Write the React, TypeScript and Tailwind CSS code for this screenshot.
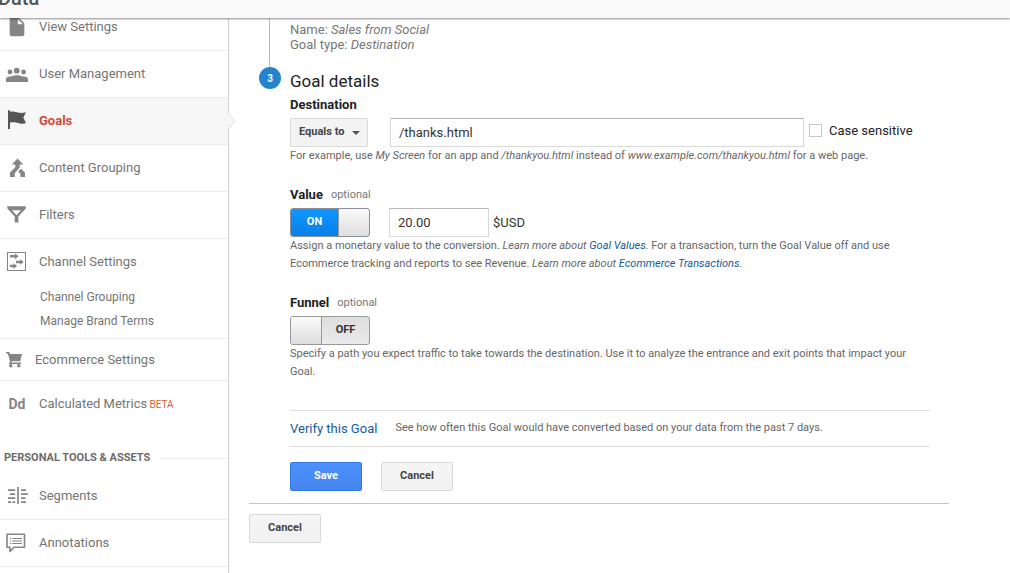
import type { ReactNode } from "react";
import { useState } from "react";
import { MdInsertDriveFile } from "react-icons/md";

const UsersIcon = () => (
	<svg className="size-6" viewBox="0 0 24 24" fill="currentColor">
		<circle cx="5" cy="10" r="2.4" />
		<circle cx="11.7" cy="8.7" r="2.9" />
		<circle cx="18.6" cy="10" r="2.4" />
		<path d="M1 20v-3c0-2 3-3 5.2-2.4C8 13.6 10 13.2 12 13.2s4 .4 5.8 1.4C20 14 23 15 23 17v3z" />
	</svg>
);

const FlagIcon = () => (
	<svg className="size-6 text-[#555]" viewBox="0 0 24 24" fill="currentColor">
		<path d="M3 1.3h2V20H3z" />
		<path d="M5 2.8c3-1 5 .2 8 .8 3 .5 5 .3 8-.4l-2.7 5.2L21 14.2c-4 1-6 .2-9-.5-3-.6-5-.6-7 0z" />
	</svg>
);

const MergeIcon = () => (
	<svg className="size-6" viewBox="0 0 24 24" fill="currentColor">
		<path d="M12.5 2.5 18.3 8.500h-3.600v3.200L9.800 17v4H5v-4.500l5.300-5.300V8.500H6.800z" />
		<path d="m16.2 12.8 3.8 4V21h-4.600v-3.200l-2.300-2.300z" />
	</svg>
);

const FilterIcon = () => (
	<svg className="size-6" viewBox="0 0 24 24" fill="currentColor">
		<path
			fillRule="evenodd"
			d="M2.3 3.2h18.500v2.200l-7.400 8.200v6h-3.700v-6L2.3 5.4zM7 7.3l4.500 4.900L16 7.300z"
		/>
	</svg>
);

const ChannelIcon = () => (
	<svg className="size-6" viewBox="0 0 24 24" fill="currentColor">
		<rect x="2.5" y="2.5" width="18" height="18" fill="none" stroke="currentColor" />
		<path d="M5 5h5V3.300L13.5 6.300 10 9.300V7.500H5zM11 10.800h4V9.200l3.700 2.800-3.700 2.800v-1.600h-4zM5 14.800h3.500v-1.600L12.200 16l-3.700 2.800v-1.600H5z" />
	</svg>
);

const CartIcon = () => (
	<svg className="size-[18px]" viewBox="0 0 18 18" fill="currentColor">
		<path d="M1 1h3.200l1 2H17l-1.800 7.200H6.800l-.5 1.300H16v1.500H4l1-3L2.800 2.600H1z" />
		<circle cx="5.8" cy="14.8" r="1.800" />
		<circle cx="13.8" cy="14.8" r="1.800" />
	</svg>
);

const SegmentsIcon = () => (
	<svg
		className="size-6"
		viewBox="0 0 24 24"
		fill="none"
		stroke="currentColor"
		strokeWidth="1.7">
		<path d="M13 3v17M3 6.200h7.200M5 10.200h5.200M3 14.200h7.200M3 18.200h3.200M7.500 18.200h2.700M16 6.200h5M16 10.200h7M16 14.200h4.500M16 18.200h5" />
	</svg>
);

const AnnotationsIcon = () => (
	<svg className="size-6" viewBox="0 0 24 24" fill="none" stroke="currentColor">
		<path
			strokeWidth="1.6"
			d="M2 3.300h17.500v13H9l-4 4.200v-4.200H2z"
			strokeLinejoin="round"
		/>
		<path d="M4.8 7.500h1.500M7.300 7.500H17M4.800 10h1.500M7.300 10H17M4.800 12.500h1.500M7.300 12.500H17" />
	</svg>
);

const NavLink = ({
	icon,
	active,
	children,
}: {
	icon: ReactNode;
	active?: boolean;
	children: ReactNode;
}) => (
	<a
		href="#"
		aria-current={active ? "page" : undefined}
		className={`flex h-[46px] items-center gap-2.5 pl-[5px] ${
			active ? "font-bold text-[#d14836]" : ""
		}`}>
		<span className="flex w-6 shrink-0 justify-center text-[#858585]">
			{icon}
		</span>
		<span>{children}</span>
	</a>
);

const Sidebar = () => (
	<nav className="-mt-3.5 w-[229px] shrink-0 border-r border-[#d0d0d0] text-[13px] text-[#757575]">
		<ul className="[&>li]:border-[#ebebeb]">
			<li className="border-b">
				<NavLink icon={<MdInsertDriveFile className="size-[22px]" />}>
					View Settings
				</NavLink>
			</li>
			<li className="border-b">
				<NavLink icon={<UsersIcon />}>User Management</NavLink>
			</li>
			<li className="relative border-b bg-[#f7f7f7]">
				<NavLink icon={<FlagIcon />} active>
					Goals
				</NavLink>
				<svg
					className="absolute top-3.5 left-full h-[18px] w-2"
					viewBox="0 0 8 18">
					<path d="M0 0v18l7.500-9z" fill="#f7f7f7" />
					<path d="m0 1 7 8-7 8" fill="none" stroke="#e0e0e0" />
				</svg>
			</li>
			<li className="border-b">
				<NavLink icon={<MergeIcon />}>Content Grouping</NavLink>
			</li>
			<li className="border-b">
				<NavLink icon={<FilterIcon />}>Filters</NavLink>
			</li>
			<li className="border-b pb-[5px]">
				<NavLink icon={<ChannelIcon />}>Channel Settings</NavLink>
				<ul className="pl-10 text-xs leading-6">
					<li>
						<a href="#">Channel Grouping</a>
					</li>
					<li>
						<a href="#">Manage Brand Terms</a>
					</li>
				</ul>
			</li>
			<li className="border-b">
				<a href="#" className="flex h-[41px] items-center gap-3 pl-[5px]">
					<span className="text-[#858585]">
						<CartIcon />
					</span>
					Ecommerce Settings
				</a>
			</li>
			<li>
				<NavLink
					icon={<span className="text-sm font-bold text-[#858585]">Dd</span>}>
					Calculated Metrics{" "}
					<span className="-ml-px text-[10px] text-[#d8622f]">BETA</span>
				</NavLink>
			</li>
		</ul>
		<h2 className="flex h-[46px] items-center gap-2.5 pt-4 pl-1 text-[11px] font-bold text-[#6b6b6b]">
			PERSONAL TOOLS &amp; ASSETS
			<span className="h-px grow bg-[#ebebeb]" />
		</h2>
		<ul className="[&>li]:border-[#ebebeb]">
			<li className="border-b">
				<NavLink icon={<SegmentsIcon />}>Segments</NavLink>
			</li>
			<li className="border-b">
				<NavLink icon={<AnnotationsIcon />}>Annotations</NavLink>
			</li>
		</ul>
	</nav>
);

const Toggle = ({
	id,
	checked,
	onChange,
}: {
	id: string;
	checked: boolean;
	onChange: (checked: boolean) => void;
}) => (
	<label
		className={`flex h-[29px] w-20 cursor-pointer overflow-hidden rounded-[3px] border text-[11px] font-bold ${
			checked
				? "border-[#8a9099] bg-linear-to-b from-[#0f96ff] to-[#0a80e8] text-white"
				: "flex-row-reverse border-[#999] bg-linear-to-b from-[#dedede] to-[#eaeaea] text-[#333]"
		}`}>
		<input
			id={id}
			type="checkbox"
			role="switch"
			className="sr-only"
			checked={checked}
			onChange={e => onChange(e.target.checked)}
		/>
		<span className="flex grow items-center justify-center">
			{checked ? "ON" : "OFF"}
		</span>
		<span
			className={`w-[31px] bg-linear-to-b from-[#fafafa] to-[#dedede] ${
				checked ? "border-l border-[#999]" : "border-r border-[#999]"
			}`}
		/>
	</label>
);

const Button = ({
	primary,
	children,
}: {
	primary?: boolean;
	children: ReactNode;
}) => (
	<button
		type="button"
		className={`h-[29px] w-[72px] rounded-xs border text-[11px] font-bold ${
			primary
				? "border-[#3079ed] bg-linear-to-b from-[#4d90fe] to-[#4787ed] text-white"
				: "border-[#d8d8d8] bg-linear-to-b from-[#f5f5f5] to-[#f1f1f1] text-[#444]"
		}`}>
		{children}
	</button>
);

const App = () => {
	const [state, setState] = useState({
		match: "equals",
		destination: "/thanks.html",
		caseSensitive: false,
		hasValue: true,
		value: "20.00",
		hasFunnel: false,
	});

	return (
		<div className="flex min-h-screen flex-col overflow-hidden bg-white font-[Roboto,sans-serif] text-[13px] text-[#222]">
			<header className="relative z-10 h-[18px] bg-[#fafafa] shadow-[0_1px_2px_rgba(0,0,0,0.45)]">
				<div className="h-full overflow-hidden">
					<h1 className="-mt-3.5 -ml-0.5 text-xl leading-6 font-medium text-[#555]">
						Data
					</h1>
				</div>
			</header>
			<div className="flex grow">
				<Sidebar />
				<main className="min-w-0 grow px-5">
					<div className="max-w-[700px]">
						<section className="flex h-[49px]">
							<div className="ml-5 w-[21px] shrink-0 border-l border-[#bbb]" />
							<div className="pt-1 leading-[15px] text-[#777]">
								<p>
									Name: <em>Sales from Social</em>
								</p>
								<p>
									Goal type: <em>Destination</em>
								</p>
							</div>
						</section>
						<section className="flex">
							<div className="w-[41px] shrink-0 pl-2.5">
								<span className="flex size-[22px] items-center justify-center rounded-full bg-[#2483ce] text-[10px] font-bold text-white">
									3
								</span>
							</div>
							<form className="max-w-[640px] grow pb-3">
								<h2 className="pt-0.5 text-[17px] leading-6">Goal details</h2>
								<label
									className="block leading-6 font-bold"
									htmlFor="destination">
									Destination
								</label>
								<div className="mt-px flex items-center">
									<div className="relative">
										<select
											aria-label="Match type"
											className="h-[29px] w-[78px] appearance-none rounded-xs border border-[#d8d8d8] bg-[#f3f3f3] pl-2 text-[11px] font-bold text-[#444]"
											value={state.match}
											onChange={e =>
												setState({ ...state, match: e.target.value })
											}>
											<option value="equals">Equals to</option>
											<option value="begins">Begins with</option>
											<option value="regex">Regular expression</option>
										</select>
										<svg
											className="pointer-events-none absolute top-[13px] right-2 h-1 w-2"
											viewBox="0 0 8 4">
											<path d="M0 0h8L4 4z" fill="#555" />
										</svg>
									</div>
									<input
										id="destination"
										type="text"
										className="ml-[22px] h-[29px] w-[414px] border border-[#d9d9d9] border-t-[#b9b9b9] px-2 text-[#333]"
										value={state.destination}
										onChange={e =>
											setState({ ...state, destination: e.target.value })
										}
									/>
									<label className="-mr-5 flex items-center gap-[7px] pb-1 pl-[5px] whitespace-nowrap">
										<input
											type="checkbox"
											className="size-[13px] appearance-none border border-[#c6c6c6] checked:bg-[#4d90fe]"
											checked={state.caseSensitive}
											onChange={e =>
												setState({ ...state, caseSensitive: e.target.checked })
											}
										/>
										Case sensitive
									</label>
								</div>
								<p className="text-[11px] leading-[18px] text-[#666]">
									For example, use <em>My Screen</em> for an app and{" "}
									<em>/thankyou.html</em> instead of{" "}
									<em>www.example.com/thankyou.html</em> for a web page.
								</p>

								<div className="mt-[18px] flex items-center gap-2 leading-6">
									<label className="font-bold" htmlFor="has-value">
										Value
									</label>
									<span className="text-[11px] text-[#777]">optional</span>
								</div>
								<div className="mt-px flex items-center">
									<Toggle
										id="has-value"
										checked={state.hasValue}
										onChange={hasValue => setState({ ...state, hasValue })}
									/>
									<input
										type="text"
										aria-label="Goal value"
										className="ml-[19px] h-[29px] w-[100px] border border-[#d9d9d9] border-t-[#b9b9b9] px-2 text-[#333]"
										value={state.value}
										onChange={e =>
											setState({ ...state, value: e.target.value })
										}
									/>
									<span className="pl-1 text-[#333]">$USD</span>
								</div>
								<p className="text-[11px] leading-[18px] text-[#666]">
									Assign a monetary value to the conversion.{" "}
									<em>
										Learn more about{" "}
										<a className="text-[#15599c]" href="#">
											Goal Values
										</a>
										.
									</em>{" "}
									For a transaction, turn the Goal Value off and use Ecommerce
									tracking and reports to see Revenue.{" "}
									<em>
										Learn more about{" "}
										<a className="text-[#15599c]" href="#">
											Ecommerce Transactions
										</a>
										.
									</em>
								</p>

								<div className="mt-[18px] flex items-center gap-2 leading-6">
									<label className="font-bold" htmlFor="has-funnel">
										Funnel
									</label>
									<span className="text-[11px] text-[#777]">optional</span>
								</div>
								<div className="mt-px">
									<Toggle
										id="has-funnel"
										checked={state.hasFunnel}
										onChange={hasFunnel => setState({ ...state, hasFunnel })}
									/>
								</div>
								<p className="text-[11px] leading-[18px] text-[#666]">
									Specify a path you expect traffic to take towards the
									destination. Use it to analyze the entrance and exit points
									that impact your Goal.
								</p>

								<div className="mt-[29px] flex h-[37px] items-center gap-[18px] border-y border-[#ddd]">
									<a className="text-[#15599c]" href="#">
										Verify this Goal
									</a>
									<span className="text-[11px] text-[#666]">
										See how often this Goal would have converted based on your
										data from the past 7 days.
									</span>
								</div>
								<div className="mt-[15px] flex gap-[19px]">
									<Button primary>Save</Button>
									<Button>Cancel</Button>
								</div>
							</form>
						</section>
						<div className="border-t border-[#c4c4c4] pt-2.5">
							<Button>Cancel</Button>
						</div>
					</div>
				</main>
			</div>
		</div>
	);
};

export default App;
